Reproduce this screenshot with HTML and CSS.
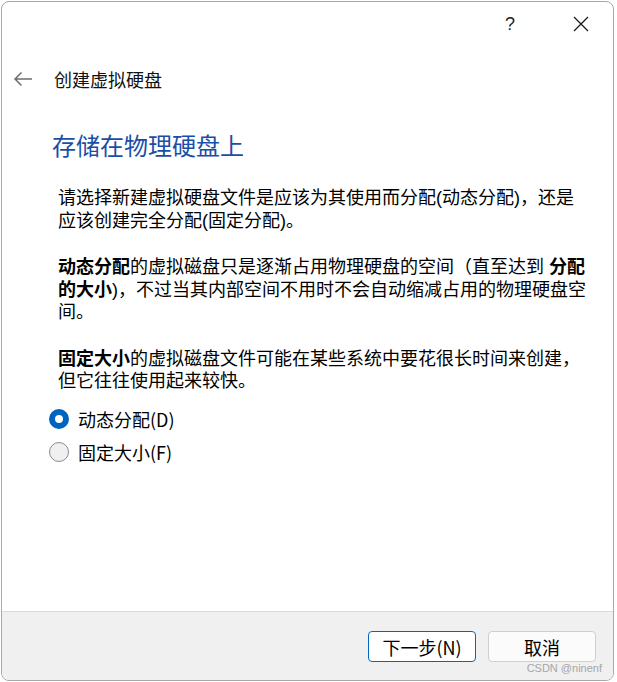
FILE: index.html
```html
<!DOCTYPE html>
<html lang="zh-CN">
<head>
<meta charset="utf-8">
<title>创建虚拟硬盘</title>
<link rel="stylesheet" href="styles.css">
</head>
<body>
<div class="window">
  <div class="titlebar">
    <span class="help">?</span>
    <span class="close">
      <svg width="16" height="16" viewBox="0 0 16 16"><path d="M1 1 L15 15 M15 1 L1 15" stroke="#1a1a1a" stroke-width="1.3" fill="none"/></svg>
    </span>
  </div>
  <div class="header">
    <svg class="back" width="20" height="16" viewBox="0 0 20 16"><path d="M19 8 H2 M8.5 1.5 L2 8 L8.5 14.5" stroke="#6e6e6e" stroke-width="1.5" fill="none"/></svg>
    <span class="title">创建虚拟硬盘</span>
  </div>
  <div class="content">
    <h1 class="heading">存储在物理硬盘上</h1>
    <p class="para first">请选择新建虚拟硬盘文件是应该为其使用而分配(动态分配)，还是<br>应该创建完全分配(固定分配)。</p>
    <p class="para"><b>动态分配</b>的虚拟磁盘只是逐渐占用物理硬盘的空间（直至达到 <b>分配<br>的大小</b>)，不过当其内部空间不用时不会自动缩减占用的物理硬盘空<br>间。</p>
    <p class="para"><b>固定大小</b>的虚拟磁盘文件可能在某些系统中要花很长时间来创建，<br>但它往往使用起来较快。</p>
    <div class="radios">
      <label class="radio"><span class="dot checked"></span><span>动态分配(D)</span></label>
      <label class="radio"><span class="dot"></span><span>固定大小(F)</span></label>
    </div>
  </div>
  <div class="footer">
    <button class="btn primary">下一步(N)</button>
    <button class="btn">取消</button>
    <span class="watermark">CSDN @ninenf</span>
  </div>
</div>
</body>
</html>
```
FILE: styles.css
```css
* { box-sizing: border-box; }
html, body { margin: 0; padding: 0; }
body {
  width: 617px;
  height: 682px;
  background: #ffffff;
  font-family: "Noto Sans CJK SC", "Noto Sans", sans-serif;
  color: #000;
  overflow: hidden;
}
.window {
  margin: 1px 3px 1px 1px;
  width: 613px;
  height: 680px;
  border: 1px solid #a8a8a8;
  border-radius: 8px;
  background: #fff;
  display: flex;
  flex-direction: column;
  overflow: hidden;
  position: relative;
}
.titlebar {
  height: 46px;
  flex: none;
  display: flex;
  align-items: center;
  justify-content: flex-end;
  padding-right: 24px;
}
.help {
  font-family: "Liberation Sans", sans-serif;
  font-size: 18px;
  color: #222;
  margin-right: 58px;
  margin-top: -2px;
}
.close { display: flex; margin-top: -2px; }
.header {
  flex: none;
  display: flex;
  align-items: center;
  height: 24px;
  margin-top: 19px;
  padding-left: 11px;
}
.back { margin-right: 21px; }
.title {
  font-size: 18px;
  line-height: 24px;
  color: #111;
}
.content {
  flex: 1;
  padding-left: 50px;
}
.heading {
  margin: 38px 0 0 0;
  font-size: 24px;
  line-height: 32px;
  font-weight: normal;
  color: #1b4ea6;
}
.para {
  margin: 24px 0 0 6px;
  font-family: "Liberation Sans", "Noto Sans CJK SC", sans-serif;
  font-size: 18px;
  line-height: 22.5px;
  white-space: nowrap;
}
.para.first { margin-top: 26px; }
.para b { font-weight: bold; }
.radios {
  margin-top: 10px;
  display: flex;
  flex-direction: column;
}
.radio {
  height: 33px;
  display: flex;
  align-items: center;
  font-size: 18px;
}
.dot {
  width: 20px;
  height: 20px;
  border-radius: 50%;
  border: 1px solid #8a8a8a;
  background: #f0f0f0;
  margin: 0 9px 0 -3px;
  flex: none;
}
.dot.checked {
  border: 6px solid #0063bd;
  background: #fff;
}
.footer {
  flex: none;
  height: 69px;
  background: #f0f0f0;
  border-top: 1px solid #dadada;
  display: flex;
  justify-content: flex-end;
  align-items: flex-start;
  gap: 12px;
  padding: 19px 17px 0 0;
  position: relative;
}
.btn {
  width: 108px;
  height: 31px;
  border: 1px solid #cfcfcf;
  border-radius: 4px;
  background: #fbfbfb;
  font-family: "Noto Sans CJK SC", sans-serif;
  font-size: 18px;
  line-height: 1;
  color: #000;
  padding: 0;
}
.btn.primary {
  border-color: #0067c0;
  background: #fff;
}
.watermark {
  position: absolute;
  right: 11px;
  bottom: 6px;
  font-family: "Liberation Sans", sans-serif;
  font-size: 11px;
  color: #a6a6a6;
}
```
